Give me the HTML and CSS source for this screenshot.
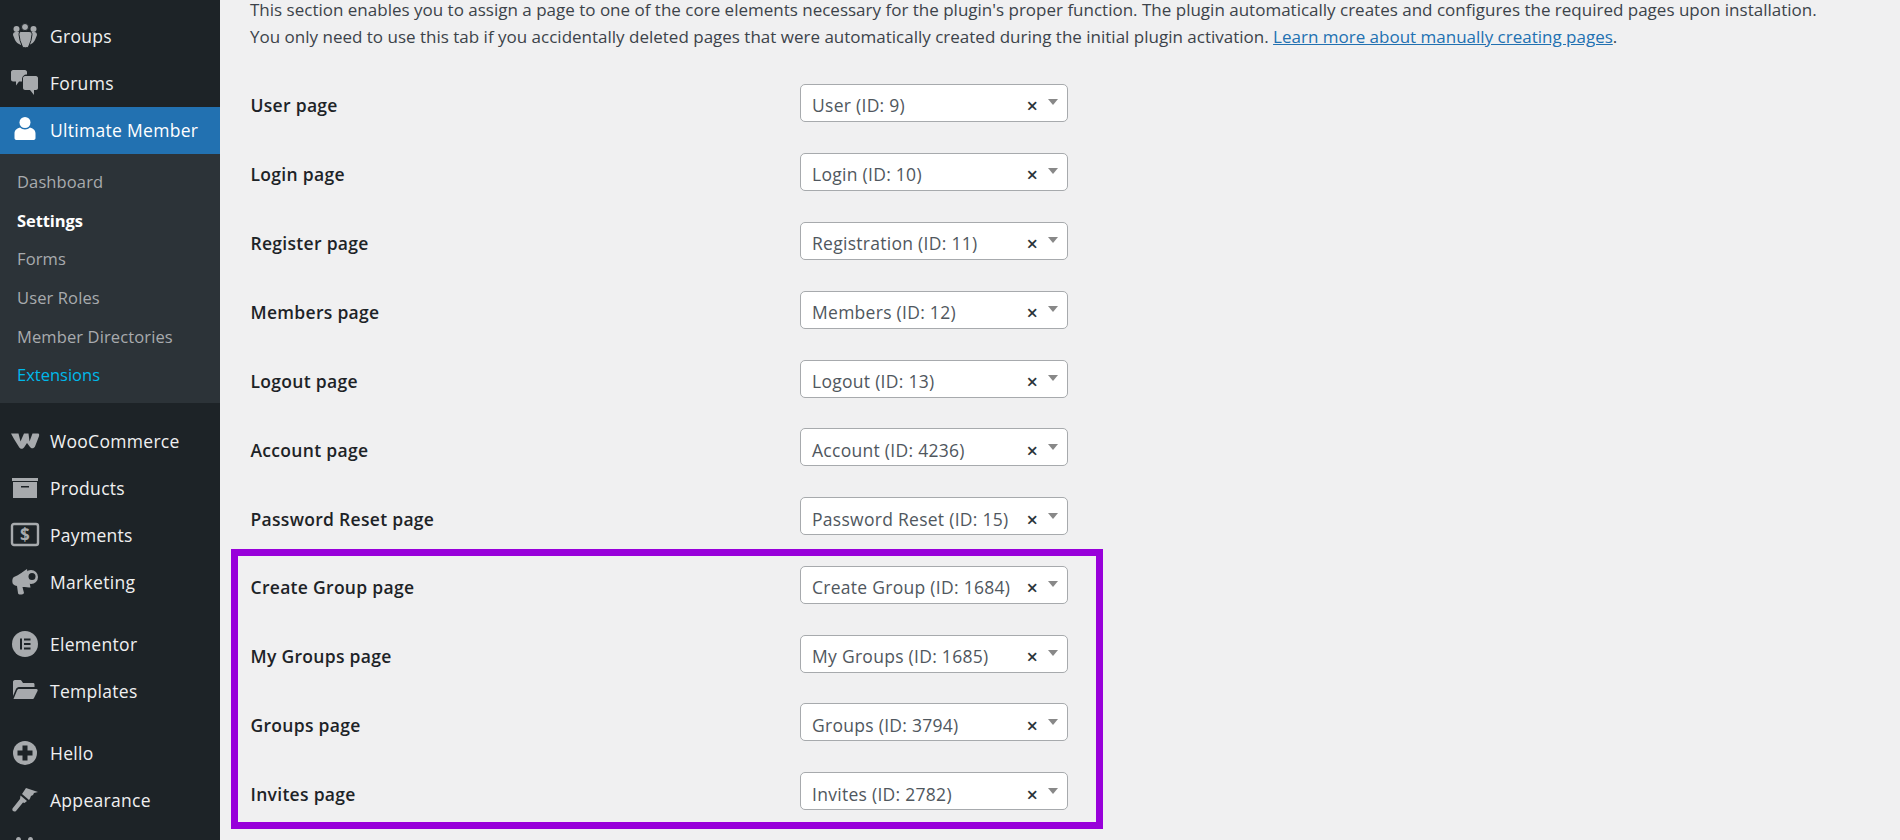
FILE: index.html
```html
<!DOCTYPE html>
<html lang="en">
<head>
<meta charset="utf-8">
<title>Ultimate Member Settings</title>
<link rel="stylesheet" href="styles.css">
</head>
<body>
<div class="layout">
  <aside class="sidebar">
    <nav class="menu">
      <a class="item"><svg class="icon" viewBox="0 0 26 26"><circle cx="4.500" cy="6" r="3"/><circle cx="21.500" cy="6" r="3"/><path d="M1 12c0-2 1-3 2.500-3h3L9 12v10c-3-1-5-3-6-5zM25 12c0-2-1-3-2.500-3h-3L17 12v10c3-1 5-3 6-5z"/><circle class="ring" cx="13" cy="4" r="3.500"/><path class="ring" d="M9 8.500h8c2 0 3 1 3 3l-1 6-2.500 6.500c-1 1-5 1-6 0L8 17.500l-1-6c0-2 1-3 2-3z"/></svg><span>Groups</span></a>
      <a class="item"><svg class="icon" viewBox="0 0 26 26"><path d="M1 0h12c1 0 2 1 2 2v2.500c-3 0-5 2-5 5v2H7l-3 4v-4H1c-1 0-2-1-2-2V2c0-1 1-2 2-2z"/><path d="M13 6h11c1 0 2 1 2 2v10c0 1-1 2-2 2h-2v5l-4-5h-5c-1 0-2-1-2-2V8c0-1 1-2 2-2z"/></svg><span>Forums</span></a>
      <a class="item item-active"><svg class="icon" viewBox="0 0 26 26"><circle cx="13" cy="5.500" r="5.500"/><path d="M8 10.500c2.500 2.500 7.500 2.500 10 0 3 1 5.500 2.500 5.500 6v4.500c0 1.500-1 2-2.500 2H5c-1.500 0-2.500-.5-2.500-2v-4.500c0-3.500 2.500-5 5.500-6z"/></svg><span>Ultimate Member</span></a>
      <ul class="submenu">
        <li class="sub">Dashboard</li>
        <li class="sub sub-current">Settings</li>
        <li class="sub">Forms</li>
        <li class="sub">User Roles</li>
        <li class="sub">Member Directories</li>
        <li class="sub sub-hover">Extensions</li>
      </ul>
      <a class="item item-first"><svg class="icon icon-wide" viewBox="0 0 28 16"><path d="M0 .5h7.500l2 8 3.500-8h4.500l1 8 3-8H27c1.500 0 1.500 2 .5 4l-3.500 9c-1 2-3.500 2.500-5 .5L16 10l-3 4.500c-1.500 2-4 1.500-5-.5L3 6 0 .5z"/></svg><span>WooCommerce</span></a>
      <a class="item"><svg class="icon" viewBox="0 0 26 26"><path d="M0 3h26v3H0z"/><path class="cut" d="M1 7h24v16H1zM9 11v1.500h8V11z"/></svg><span>Products</span></a>
      <a class="item"><svg class="icon icon-wide" viewBox="0 0 28 24"><rect class="outline" x="1" y="1" width="26" height="21" rx="2"/><text class="dollar" x="14" y="18">$</text></svg><span>Payments</span></a>
      <a class="item"><svg class="icon" viewBox="0 0 26 26"><path d="M15 0c-3 2-8 6-13 8-2 1-2 5-1 7 1 1 3 2 4 2l1 7c0 2 5 2 6 0l-1.500-6c3 0 6 .5 8 .5z"/><circle cx="19" cy="8" r="7"/><circle class="hole" cx="20" cy="7.500" r="3.500"/></svg><span>Marketing</span></a>
      <a class="item item-first"><svg class="icon" viewBox="0 0 26 26"><circle cx="13" cy="13" r="13"/><path class="hole" d="M8 7.500h2v11H8zM12 7.500h6.500v2H12zM12 12h6.500v2H12zM12 16.500h6.500v2H12z"/></svg><span>Elementor</span></a>
      <a class="item"><svg class="icon" viewBox="0 0 26 26"><path d="M1 4c0-1 .5-2 2-2h5c1 0 1.500.5 2 1.500L11 5h10c1 0 1.500.5 1.500 1.500V9H7c-1.500 0-2.500 1-3 2l-3 7z"/><path d="M7 11h17.500c1 0 1.500 1 1 2l-3.500 7c-.5 1-1 1-2 1H1.500l3.500-8.500c.5-1 1-1.500 2-1.500z"/></svg><span>Templates</span></a>
      <a class="item item-first"><svg class="icon" viewBox="0 0 26 26"><circle cx="13" cy="13" r="12"/><path class="hole" d="M10.500 5.500h5v5h5v5h-5v5h-5v-5h-5v-5h5z"/></svg><span>Hello</span></a>
      <a class="item"><svg class="icon" viewBox="0 0 26 26"><path d="M14 1l12 4-4 1-1 2-2 1-1 2.500-1 1.500-7-6z"/><path d="M8.500 8.500l6.500 5.500-2.500 2L11 15.500 4 24c-1.500 1.500-4.500 0-3.500-2.500L8 12z"/></svg><span>Appearance</span></a>
      <a class="item"><svg class="icon" viewBox="0 0 26 26"><path d="M4 6c0-2 1-3 2.500-3S9 4 9 6v6H4zM16 6c0-2 1-3 2.500-3S21 4 21 6v6h-5z"/></svg></a>
    </nav>
  </aside>
  <main class="content">
    <p class="intro">This section enables you to assign a page to one of the core elements necessary for the plugin's proper function. The plugin automatically creates and configures the required pages upon installation.<br>You only need to use this tab if you accidentally deleted pages that were automatically created during the initial plugin activation. <a class="link">Learn more about manually creating pages</a>.</p>
    <div class="rows">
      <div class="row"><span class="label">User page</span><div class="select"><span class="value">User (ID: 9)</span><span class="clear">×</span><span class="arrow"></span></div></div>
      <div class="row"><span class="label">Login page</span><div class="select"><span class="value">Login (ID: 10)</span><span class="clear">×</span><span class="arrow"></span></div></div>
      <div class="row"><span class="label">Register page</span><div class="select"><span class="value">Registration (ID: 11)</span><span class="clear">×</span><span class="arrow"></span></div></div>
      <div class="row"><span class="label">Members page</span><div class="select"><span class="value">Members (ID: 12)</span><span class="clear">×</span><span class="arrow"></span></div></div>
      <div class="row"><span class="label">Logout page</span><div class="select"><span class="value">Logout (ID: 13)</span><span class="clear">×</span><span class="arrow"></span></div></div>
      <div class="row"><span class="label">Account page</span><div class="select"><span class="value">Account (ID: 4236)</span><span class="clear">×</span><span class="arrow"></span></div></div>
      <div class="row"><span class="label">Password Reset page</span><div class="select"><span class="value">Password Reset (ID: 15)</span><span class="clear">×</span><span class="arrow"></span></div></div>
      <div class="highlight">
        <div class="row"><span class="label">Create Group page</span><div class="select"><span class="value">Create Group (ID: 1684)</span><span class="clear">×</span><span class="arrow"></span></div></div>
        <div class="row"><span class="label">My Groups page</span><div class="select"><span class="value">My Groups (ID: 1685)</span><span class="clear">×</span><span class="arrow"></span></div></div>
        <div class="row"><span class="label">Groups page</span><div class="select"><span class="value">Groups (ID: 3794)</span><span class="clear">×</span><span class="arrow"></span></div></div>
        <div class="row"><span class="label">Invites page</span><div class="select"><span class="value">Invites (ID: 2782)</span><span class="clear">×</span><span class="arrow"></span></div></div>
      </div>
    </div>
  </main>
</div>
</body>
</html>
```
FILE: styles.css
```css
* { box-sizing: border-box; }
html, body { margin: 0; height: 100%; overflow: hidden; }
body {
  background: #f0f0f1;
  color: #3c434a;
  font-family: "Open Sans", "Noto Sans", sans-serif;
  font-size: 16px;
}
.layout { display: flex; height: 840px; overflow: hidden; }
.sidebar { flex: 0 0 220px; background: #1d2327; overflow: hidden; }
.menu { padding-top: 12.5px; }
.item {
  display: flex;
  align-items: center;
  height: 47px;
  padding-left: 12px;
  gap: 12px;
  color: #f0f0f1;
  font-size: 17.500px;
  letter-spacing: 0.300px;
}
.item span { line-height: 1; padding-top: 2px; }
.item-first { margin-top: 15px; }
.item-active { background: #2271b1; color: #fff; }
.icon { width: 26px; height: 26px; flex: none; fill: #a7aaad; overflow: visible; }
.icon-wide { width: 28px; height: 24px; margin: 0 -1px; }
.item-active .icon { fill: #fff; }
.icon .hole { fill: #1d2327; }
.icon .ring { stroke: #1d2327; stroke-width: 1; }
.icon .cut { fill-rule: evenodd; }
.icon .outline { fill: none; stroke: #a7aaad; stroke-width: 2.400; }
.icon .dollar { fill: #a7aaad; font-size: 17px; font-weight: 700; text-anchor: middle; font-family: "Open Sans", sans-serif; }
.submenu {
  list-style: none;
  margin: 0;
  padding: 9.500px 0 7.500px;
  background: #2c3338;
}
.sub {
  height: 38.700px;
  line-height: 38.700px;
  padding-left: 17px;
  font-size: 16.500px;
  letter-spacing: 0.120px;
  color: #a8abae;
}
.sub-current { color: #fff; font-weight: 700; letter-spacing: -0.100px; }
.sub-hover { color: #00b9eb; letter-spacing: 0; }
.content { flex: 1; min-width: 0; padding-left: 11px; }
.intro {
  margin: -3px 0 0;
  padding-left: 19px;
  line-height: 26.500px;
  font-size: 17px;
  white-space: nowrap;
  color: #3c434a;
}
.link { color: #2271b1; text-decoration: underline; }
.rows { margin-top: 18.500px; }
.row {
  display: flex;
  align-items: center;
  height: 68.900px;
  padding-left: 19.500px;
}
.label {
  flex: 0 0 549.500px;
  padding-top: 5px;
  font-weight: 600;
  font-size: 17.500px;
  letter-spacing: 0.300px;
  color: #1d2327;
}
.select {
  display: flex;
  align-items: center;
  width: 268px;
  height: 38px;
  padding: 0 9px 0 11px;
  background: #fff;
  border: 1px solid #a7aaad;
  border-radius: 5px;
}
.value {
  flex: 1;
  padding-top: 5px;
  font-size: 17.500px;
  letter-spacing: 0.280px;
  color: #50575e;
  white-space: nowrap;
}
.clear {
  font-size: 20px;
  font-weight: 600;
  line-height: 1;
  padding-top: 7px;
  margin-right: 10px;
  color: #2c3338;
}
.arrow {
  width: 0;
  height: 0;
  margin-top: -1px;
  border-left: 5px solid transparent;
  border-right: 5px solid transparent;
  border-top: 6px solid #888;
}
.highlight {
  width: 872px;
  height: 280px;
  border: 7px solid #9800da;
  margin-top: -2px;
}
.highlight .row { padding-left: 12.500px; }
.highlight .row:first-child { margin-top: -5.500px; }
```
